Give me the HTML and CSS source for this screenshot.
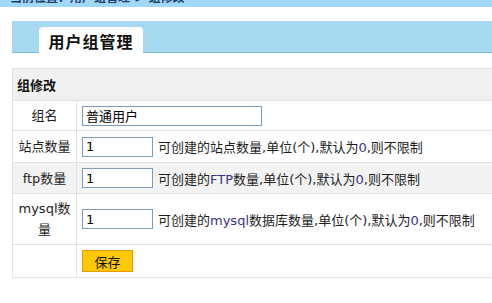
FILE: index.html
```html
<!DOCTYPE html>
<html lang="zh">
<head>
<meta charset="utf-8">
<title>用户组管理</title>
<link rel="stylesheet" href="styles.css">
</head>
<body>
<div class="topbar"><span class="crumb">当前位置：用户组管理 &gt; 组修改</span></div>
<div class="titlebar"><div class="tab">用户组管理</div></div>
<table class="form">
  <tr class="head"><th colspan="2">组修改</th></tr>
  <tr class="r-name">
    <td class="label">组名</td>
    <td class="field"><input class="inp wide" type="text" value="普通用户"></td>
  </tr>
  <tr class="r-site">
    <td class="label">站点数量</td>
    <td class="field"><input class="inp num" type="text" value="1"><span class="hint">可创建的站点数量,单位(个),默认为<span class="zero">0</span>,则不限制</span></td>
  </tr>
  <tr class="r-ftp alt">
    <td class="label">ftp数量</td>
    <td class="field"><input class="inp num" type="text" value="1"><span class="hint">可创建的<span class="lat">FTP</span>数量,单位(个),默认为<span class="zero">0</span>,则不限制</span></td>
  </tr>
  <tr class="r-mysql">
    <td class="label">mysql数量</td>
    <td class="field"><input class="inp num" type="text" value="1"><span class="hint">可创建的<span class="lat">mysql</span>数据库数量,单位(个),默认为<span class="zero">0</span>,则不限制</span></td>
  </tr>
  <tr class="r-save">
    <td class="label"></td>
    <td class="field"><button class="save" type="button">保存</button></td>
  </tr>
</table>
</body>
</html>
```
FILE: styles.css
```css
html, body {
  margin: 0;
  padding: 0;
  background: #ffffff;
  overflow: hidden;
}
body {
  font-family: "DejaVu Sans", "Noto Sans CJK SC", sans-serif;
  font-size: 13px;
  color: #1e1e1e;
}
.topbar {
  height: 7px;
  background: #a3d8fd;
  overflow: hidden;
}
.crumb {
  display: block;
  padding-left: 10px;
  margin-top: -9px;
  font-size: 12px;
  line-height: 14px;
  color: #1c3f6e;
  font-weight: bold;
}
.titlebar {
  margin: 14px 0 0 12px;
  height: 31px;
  background: #a6d9ef;
  border-bottom: 1px solid #7fbdd8;
  display: flex;
  align-items: flex-end;
}
.tab {
  margin-left: 27px;
  margin-bottom: -1px;
  width: 104px;
  height: 26px;
  background: #ffffff;
  border-radius: 4px 4px 0 0;
  font-family: "Noto Sans CJK SC", sans-serif;
  font-size: 16px;
  font-weight: bold;
  letter-spacing: 1px;
  color: #111;
  line-height: 26px;
  text-align: center;
  box-sizing: border-box;
  padding-top: 1px;
}
.form {
  margin: 15px 0 0 12px;
  width: 500px;
  border-collapse: collapse;
  border: 1px solid #e2e2e2;
}
.form th, .form td {
  border: 1px solid #e2e2e2;
  padding: 0;
}
.head th {
  background: #f1f1f1;
  text-align: left;
  font-weight: bold;
  padding-left: 4px;
  height: 31px;
  color: #111;
}
.label {
  width: 64px;
  text-align: center;
  padding: 0 5px !important;
  box-sizing: border-box;
  line-height: 21px;
}
.field {
  padding-left: 5px !important;
  white-space: nowrap;
}
.alt td {
  background: #f3f3f3;
}
.r-name td { height: 29px; }
.r-site td { height: 31px; }
.r-ftp td { height: 30px; }
.r-mysql td { height: 50px; }
.r-save td { height: 32px; }
.inp {
  box-sizing: border-box;
  height: 20px;
  border: 1px solid #7f9db9;
  padding: 0 3px;
  font-family: "DejaVu Sans", "Noto Sans CJK SC", sans-serif;
  font-size: 13px;
  color: #000;
  vertical-align: middle;
  background: #fff;
}
.wide { width: 180px; }
.num { width: 71px; }
.hint {
  margin-left: 5px;
  vertical-align: middle;
}
.lat, .zero {
  color: #3b3486;
}
.save {
  box-sizing: border-box;
  width: 51px;
  height: 22px;
  background: #ffc800;
  border: 1px solid #e59b00;
  font-family: "Noto Sans CJK SC", sans-serif;
  font-size: 13px;
  color: #111;
  padding: 0;
  vertical-align: middle;
}
```
